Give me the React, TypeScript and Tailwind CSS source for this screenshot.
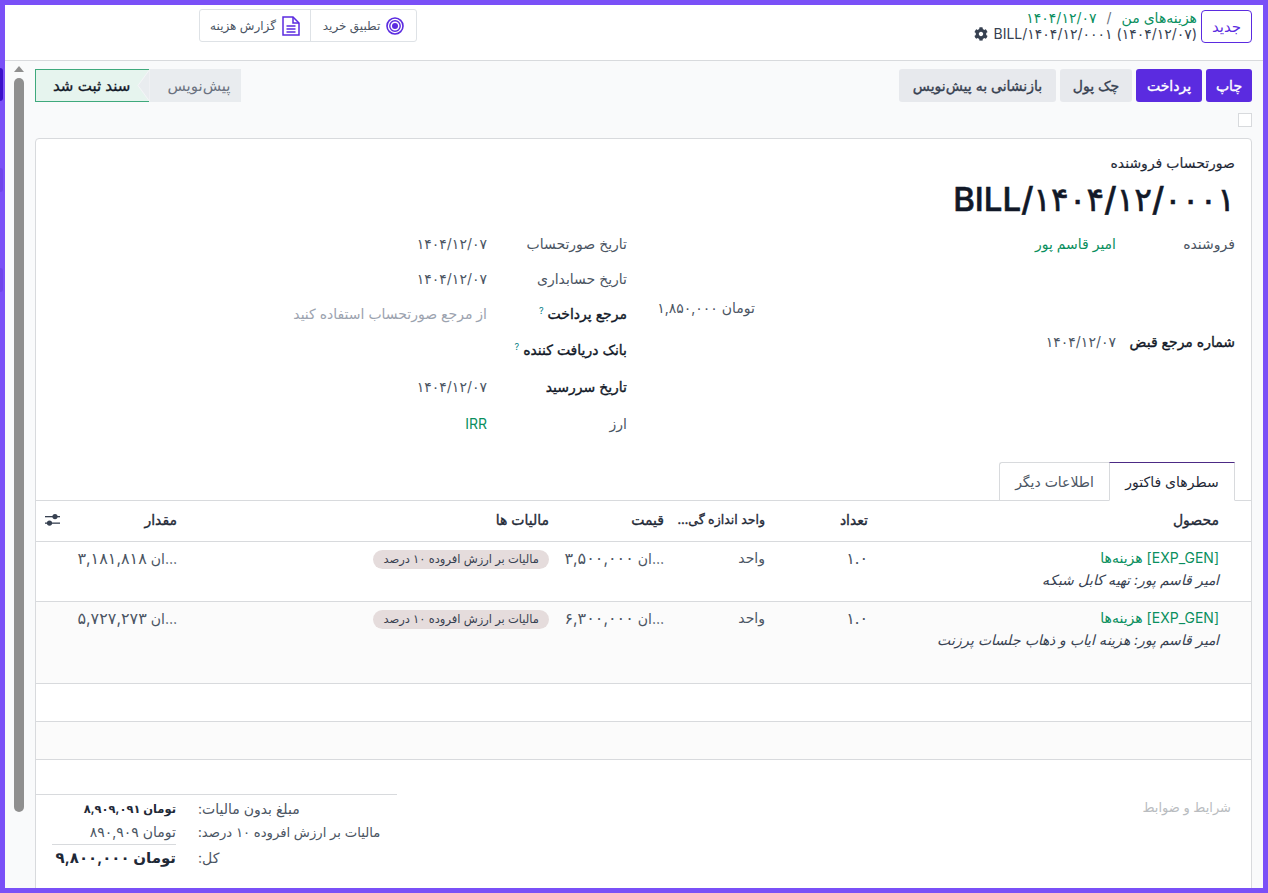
import { FaCog } from "react-icons/fa";

const rows = [
  {
    desc: "امیر قاسم پور: تهیه کابل شبکه",
    price: "۳,۵۰۰,۰۰۰",
    amount: "۳,۱۸۱,۸۱۸",
    height: "h-[60px]",
    bg: "bg-white",
  },
  {
    desc: "امیر قاسم پور: هزینه ایاب و ذهاب جلسات پرزنت",
    price: "۶,۳۰۰,۰۰۰",
    amount: "۵,۷۲۷,۲۷۳",
    height: "h-[82px]",
    bg: "bg-[#fbfbfb]",
  },
];

// DejaVu has no medium weight, so strong labels get a thin stroke instead
const medium = "[-webkit-text-stroke:0.35px_currentColor]";

function TargetIcon() {
  return (
    <svg width="18" height="18" viewBox="0 0 18 18" fill="none">
      <circle cx="9" cy="9" r="8" stroke="#5b2be0" strokeWidth="1.6" />
      <circle cx="9" cy="9" r="5.2" stroke="#5b2be0" strokeWidth="1.4" />
      <circle cx="9" cy="9" r="3" fill="#5b2be0" />
    </svg>
  );
}

function FileIcon() {
  return (
    <svg width="18" height="20" viewBox="0 0 18 20" fill="none" stroke="#5b2be0" strokeWidth="1.5">
      <path d="M1 1h10l6 6v12H1z" />
      <path d="M11 1v6h6" />
      <path d="M4.5 10h9M4.5 13h9M4.5 16h9" />
    </svg>
  );
}

function SlidersIcon() {
  return (
    <svg width="15" height="14" viewBox="0 0 15 14" fill="#374151">
      <rect x="0" y="3" width="15" height="1.3" />
      <rect x="0" y="9.5" width="15" height="1.3" />
      <circle cx="10" cy="3.6" r="2.6" />
      <circle cx="4.5" cy="10.1" r="2.6" />
    </svg>
  );
}

function Help() {
  return <sup className="text-[9px] text-[#017e84] [-webkit-text-stroke:0]">?</sup>;
}

function FormRow({ label, value, h }: { label: string; value: string; h: string }) {
  return (
    <div className={"flex items-center " + h}>
      <span className="w-[140px]">{label}</span>
      <span>{value}</span>
    </div>
  );
}

export default function App() {
  return (
    <div dir="rtl" className="relative h-[893px] overflow-hidden bg-[#7a50f7] p-[5px] font-['Inter','DejaVu_Sans',sans-serif] text-[14px] leading-[18px] text-[#4b5563]">
      <div className="flex h-full flex-col overflow-hidden bg-[#f9fafb]">
        {/* top bar */}
        <header className="flex h-[56px] shrink-0 items-start justify-between border-b border-[#d8dadd] bg-white pl-[194px] pr-[11px]">
          <div className="flex items-start gap-[4px] pt-[5px]">
            <button className="h-[33px] w-[51px] rounded-[4px] border border-[#5b2be0] text-[15px] text-[#5b2be0]">جدید</button>
            <div>
              <div className="flex gap-[10px] leading-[15px] text-[#0a8f5e]">
                <span>هزینه‌های من</span>
                <span className="text-[#6b7280]">/</span>
                <span>۱۴۰۴/۱۲/۰۷</span>
              </div>
              <div className="flex items-center gap-[6px] whitespace-nowrap leading-[17px] text-[#374151]">
                <span>(۱۴۰۴/۱۲/۰۷) BILL/۱۴۰۴/۱۲/۰۰۰۱</span>
                <FaCog className="h-[14px] w-[14px] text-[#374151]" />
              </div>
            </div>
          </div>
          <div className="mt-[4px] flex h-[33px] rounded-[3px] border border-[#dee2e6] bg-white text-[12px]">
            <div className="flex w-[106px] items-center justify-center gap-[6px] border-l border-[#dee2e6]">
              <TargetIcon />
              <span>تطبیق خرید</span>
            </div>
            <div className="flex w-[110px] items-center justify-center gap-[6px]">
              <FileIcon />
              <span>گزارش هزینه</span>
            </div>
          </div>
        </header>

        <div className="flex min-h-0 flex-1">
          <main className="mr-[11px] min-w-0 flex-1">
            {/* action row */}
            <div className="mt-[8px] flex h-[33px] justify-between">
              <div className={"flex gap-[4px] " + medium}>
                <button className="h-[33px] w-[46px] rounded-[3px] bg-[#5b2be0] text-white">چاپ</button>
                <button className="h-[33px] w-[66px] rounded-[3px] bg-[#5b2be0] text-white">پرداخت</button>
                <button className="h-[33px] w-[72px] rounded-[3px] bg-[#e7e9ed] text-[#374151]">چک پول</button>
                <button className="h-[33px] w-[157px] rounded-[3px] bg-[#e7e9ed] text-[#374151]">بازنشانی به پیش‌نویس</button>
              </div>
              <div className="flex h-[33px]">
                <div className="flex w-[91px] items-center justify-center bg-[#e9ecef] pl-[7px] text-[15px] text-[#6b7280]">پیش‌نویس</div>
                <div className="relative flex w-[115px] items-center border-y border-l border-[#3fa97c] bg-[#e6f4ee] pl-[17px] text-[15px] text-[#111827]">
                  <svg className="absolute -top-px right-0" width="13" height="33" viewBox="0 0 13 33">
                    <path d="M13 0L1 16.5L13 33z" fill="#e9ecef" stroke="#f4f5f7" strokeWidth="1" />
                  </svg>
                  <span className={"w-full whitespace-nowrap text-left " + medium}>سند ثبت شد</span>
                </div>
              </div>
            </div>

            {/* selection checkbox */}
            <div className="mt-[11px] h-[14px] w-[14px] border border-[#d8dadd] bg-white" />

            {/* sheet */}
            <section className="mt-[11px] rounded-t-[4px] border border-[#d8dadd] bg-white">
              <div className="pr-[16px] pt-[14px]">
                <div className="leading-[20px] text-[#1f2937] [-webkit-text-stroke:0.15px_currentColor]">صورتحساب فروشنده</div>
                <h1 className="mt-[6px] text-[33px] font-medium leading-[40px] text-[#111827] [-webkit-text-stroke:0.6px_currentColor]">BILL/۱۴۰۴/۱۲/۰۰۰۱</h1>
              </div>

              <div className="mt-[7px] flex">
                <div className="w-[611px] shrink-0 pr-[16px]">
                  <div className="flex h-[36px] items-center">
                    <span className="w-[119px]">فروشنده</span>
                    <span className="text-[#0a8f5e]">امیر قاسم پور</span>
                  </div>
                  <div className="mr-[480px] mt-[36px] flex h-[20px] items-center whitespace-nowrap">تومان ۱,۸۵۰,۰۰۰</div>
                  <div className="mt-[6px] flex h-[36px] items-center">
                    <span className={"w-[119px] whitespace-nowrap text-[#111827] " + medium}>شماره مرجع قبض</span>
                    <span>۱۴۰۴/۱۲/۰۷</span>
                  </div>
                </div>
                <div className="flex-1 pr-[13px]">
                  <FormRow label="تاریخ صورتحساب" value="۱۴۰۴/۱۲/۰۷" h="h-[35px]" />
                  <FormRow label="تاریخ حسابداری" value="۱۴۰۴/۱۲/۰۷" h="h-[35px]" />
                  <div className="flex h-[35px] items-center">
                    <span className={"w-[140px] text-[#111827] " + medium}>مرجع پرداخت <Help /></span>
                    <span className="text-[#9ca3af]">از مرجع صورتحساب استفاده کنید</span>
                  </div>
                  <div className="flex h-[37px] items-center">
                    <span className={"w-[140px] whitespace-nowrap text-[#111827] " + medium}>بانک دریافت کننده <Help /></span>
                  </div>
                  <div className="flex h-[38px] items-center">
                    <span className={"w-[140px] text-[#111827] " + medium}>تاریخ سررسید</span>
                    <span>۱۴۰۴/۱۲/۰۷</span>
                  </div>
                  <div className="flex h-[36px] items-center">
                    <span className="w-[140px]">ارز</span>
                    <span className="text-[#0a8f5e]">IRR</span>
                  </div>
                </div>
              </div>

              {/* tabs */}
              <div className="mt-[20px] flex border-b border-[#d8dadd] pr-[16px]">
                <div className="-mb-px flex h-[39px] w-[126px] items-center justify-center border border-x-[#d8dadd] border-b-white border-t-[#4c2a85] bg-white text-[#1f2937]">
                  سطرهای فاکتور
                </div>
                <div className="flex h-[38px] w-[110px] items-center justify-center rounded-tl-[3px] border-l border-t border-[#d8dadd]">
                  اطلاعات دیگر
                </div>
              </div>

              {/* invoice lines */}
              <table className="w-full table-fixed border-collapse">
                <thead>
                  <tr className={"h-[40px] border-b border-[#d8dadd] text-right text-[#1f2937] " + medium}>
                    <th className="w-[383px] pb-[2px] pr-[32px] font-normal">محصول</th>
                    <th className="w-[103px] pb-[2px] font-normal">تعداد</th>
                    <th className="w-[101px] whitespace-nowrap pb-[2px] text-[12.5px] font-normal">واحد اندازه گی…</th>
                    <th className="w-[115px] pb-[2px] font-normal">قیمت</th>
                    <th className="w-[372px] pb-[2px] font-normal">مالیات ها</th>
                    <th className="pb-[2px] font-normal">
                      <div className="flex items-center justify-between pl-[9px]">
                        <span>مقدار</span>
                        <SlidersIcon />
                      </div>
                    </th>
                  </tr>
                </thead>
                <tbody>
                  {rows.map((r) => (
                    <tr key={r.amount} className={"border-b border-[#d8dadd] align-top " + r.height + " " + r.bg}>
                      <td className="pr-[32px] pt-[7px]">
                        <div className="text-[#0a8f5e]">[EXP_GEN] هزینه‌ها</div>
                        <div className="mt-[4px] whitespace-nowrap italic text-[#374151]">{r.desc}</div>
                      </td>
                      <td className="pt-[7px] text-[16px]">۱.۰</td>
                      <td className="pt-[7px]">واحد</td>
                      <td className="pt-[7px]">
                        <span dir="ltr" className="whitespace-nowrap"><span className="text-[16px]">{r.price}</span> ان…</span>
                      </td>
                      <td className="pt-[7px]">
                        <span className="inline-block h-[19px] whitespace-nowrap rounded-full bg-[#e5dcdc] px-[10px] text-[11.5px] leading-[19px] text-[#374151]">
                          مالیات بر ارزش افروده ۱۰ درصد
                        </span>
                      </td>
                      <td className="pt-[7px]">
                        <span dir="ltr" className="whitespace-nowrap"><span className="text-[16px]">{r.amount}</span> ان…</span>
                      </td>
                    </tr>
                  ))}
                  <tr className="h-[38px] border-b border-[#d8dadd] bg-white">
                    <td colSpan={6} />
                  </tr>
                  <tr className="h-[38px] border-b border-[#d8dadd] bg-[#fbfbfb]">
                    <td colSpan={6} />
                  </tr>
                </tbody>
              </table>

              {/* notes and totals */}
              <div className="flex justify-between pb-[20px]">
                <div className="pr-[20px] pt-[38px] text-[13px] text-[#b9bcc0]">شرایط و ضوابط</div>
                <div className="mt-[34px] w-[361px] border-t border-[#d8dadd] pt-[3px]">
                  <div className="grid grid-cols-[199px_22px_124px] justify-start">
                    <span className="h-[23px] pt-[2px] text-left">مبلغ بدون مالیات:</span>
                    <span />
                    <span className="h-[23px] whitespace-nowrap pt-[2px] text-[11.5px] font-bold text-[#1f2937]">تومان ۸,۹۰۹,۰۹۱</span>
                    <span className="h-[23px] whitespace-nowrap pt-[2px] text-left text-[13.2px]">مالیات بر ارزش افروده ۱۰ درصد:</span>
                    <span />
                    <span className="h-[23px] whitespace-nowrap pt-[2px]">تومان ۸۹۰,۹۰۹</span>
                    <span className="pt-[5px] text-left">کل:</span>
                    <span />
                    <span className="whitespace-nowrap border-t border-[#d8dadd] text-[15px] font-bold leading-[26px] text-[#1f2937]">تومان ۹,۸۰۰,۰۰۰</span>
                  </div>
                </div>
              </div>
            </section>
          </main>

          {/* page scrollbar */}
          <div className="flex w-[30px] shrink-0 flex-col items-end pl-[9px] pt-[5px]">
            <div className="h-0 w-0 border-x-[5px] border-b-[6px] border-x-transparent border-b-[#8f8f8f]" />
            <div className="mt-[6px] h-[734px] w-[10px] rounded-[5px] bg-[#8f8f8f]" />
          </div>
        </div>
      </div>

      {/* sidebar items peeking from behind the frame */}
      <div className="absolute left-0 top-[68px] h-[33px] w-[3px] rounded-r-[3px] bg-[#3a10c8]" />
      <div className="absolute left-0 top-[168px] h-[24px] w-[3px] rounded-r-[8px] bg-[#6f45ea]" />
      <div className="absolute left-0 top-[268px] h-[24px] w-[3px] rounded-r-[8px] bg-[#6f45ea]" />
    </div>
  );
}
